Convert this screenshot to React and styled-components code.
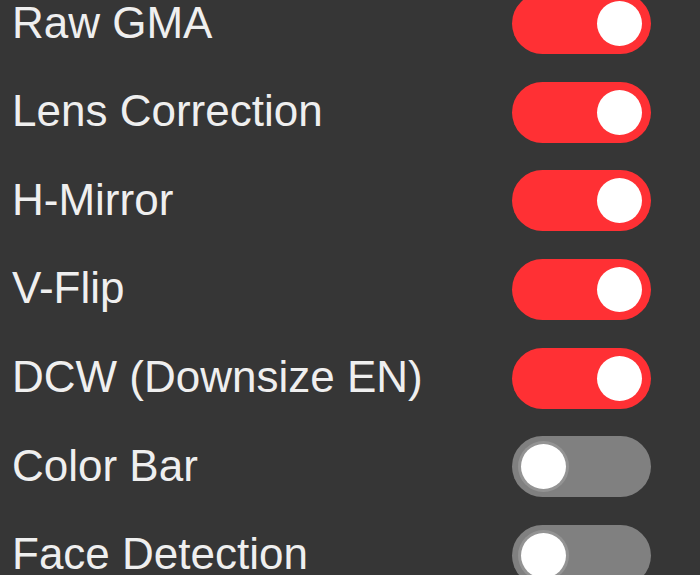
import React, { useState } from 'react'
import styled, { createGlobalStyle } from 'styled-components'

const Global = createGlobalStyle`
  html, body {
    margin: 0;
    padding: 0;
    background: #363636;
    overflow: hidden;
  }
`

const settings = [
  { id: 'raw_gma', label: 'Raw GMA', on: true },
  { id: 'lenc', label: 'Lens Correction', on: true },
  { id: 'hmirror', label: 'H-Mirror', on: true },
  { id: 'vflip', label: 'V-Flip', on: true },
  { id: 'dcw', label: 'DCW (Downsize EN)', on: true },
  { id: 'colorbar', label: 'Color Bar', on: false },
  { id: 'face_detect', label: 'Face Detection', on: false },
]

const App = () => {
  const [state, setState] = useState(
    Object.fromEntries(settings.map((s) => [s.id, s.on]))
  )
  const flip = (id) => setState((s) => ({ ...s, [id]: !s[id] }))

  return (
    <>
      <Global />
      <Panel>
        {settings.map((s) => (
          <Row key={s.id}>
            <Label>{s.label}</Label>
            <Switch $on={state[s.id]} onClick={() => flip(s.id)}>
              <Knob $on={state[s.id]} />
            </Switch>
          </Row>
        ))}
      </Panel>
    </>
  )
}

export default App

const Panel = styled.div`
  width: 700px;
  min-height: 600px;
  background: #363636;
  display: flex;
  flex-direction: column;
  gap: 27.67px;
  padding: 0 0 0 12px;
  margin-top: -7px;
  box-sizing: border-box;
`
const Row = styled.div`
  display: flex;
  align-items: center;
  height: 61px;
  flex-shrink: 0;
`
const Label = styled.div`
  width: 500px;
  color: #efefef;
  font-family: "Liberation Sans", Arial, Helvetica, sans-serif;
  font-size: 44px;
  line-height: 61px;
  white-space: nowrap;
  margin-top: -3px;
`
const Switch = styled.div`
  width: 139px;
  height: 61px;
  border-radius: 31px;
  background: ${(p) => (p.$on ? '#ff3034' : '#808080')};
  display: flex;
  align-items: center;
  justify-content: ${(p) => (p.$on ? 'flex-end' : 'flex-start')};
  padding: 0 9px;
  box-sizing: border-box;
  cursor: pointer;
`
const Knob = styled.div`
  width: 45px;
  height: 45px;
  border-radius: 50%;
  background: #fff;
  box-shadow: ${(p) => (p.$on ? 'none' : '0 0 0 3px #939393')};
`
